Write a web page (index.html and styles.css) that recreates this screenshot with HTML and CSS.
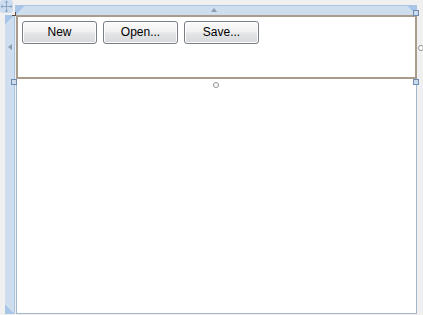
FILE: index.html
```html
<!DOCTYPE html>
<html>
<head>
<meta charset="utf-8">
<link rel="stylesheet" href="styles.css">
</head>
<body>
<div class="designer">
  <div class="corner"></div>
  <div class="ruler-top"><span class="tri-up"></span></div>
  <div class="ruler-left"><span class="tri-left"></span></div>
  <div class="canvas">
    <div class="panel">
      <button class="btn">New</button>
      <button class="btn">Open...</button>
      <button class="btn">Save...</button>
    </div>
  </div>
  <div class="move">
    <svg width="13" height="13" viewBox="0 0 13 13">
      <g fill="none" stroke="#8aa6c4" stroke-width="1">
        <path d="M6.5 1.5v10M1.5 6.5h10"/>
      </g>
      <g fill="#8aa6c4">
        <path d="M6.5 0.5l2 2h-4z"/>
        <path d="M6.5 12.5l2-2h-4z"/>
        <path d="M0.5 6.5l2-2v4z"/>
        <path d="M12.5 6.5l-2-2v4z"/>
      </g>
    </svg>
  </div>
  <span class="mark-tl"></span>
  <span class="handle h-tr"></span>
  <span class="handle h-br"></span>
  <span class="handle h-bl"></span>
  <span class="circle c-bottom"></span>
  <span class="circle c-right"></span>
</div>
</body>
</html>
```
FILE: styles.css
```css
html, body {
  margin: 0;
  padding: 0;
  background: #f0f0f0;
  width: 423px;
  height: 315px;
  overflow: hidden;
}
.designer {
  position: relative;
  display: grid;
  grid-template-columns: 5px 10px 1px 401px;
  grid-template-rows: 5px 10px 299px;
  width: 423px;
  height: 315px;
}
.corner {
  grid-column: 2;
  grid-row: 2;
}
.ruler-top {
  grid-column: 3 / 5;
  grid-row: 2;
  background: #cfdeef;
  border-top: 1px solid #abc6e4;
  box-sizing: border-box;
  position: relative;
  background-image: linear-gradient(225deg, #a8c5e8 0 7px, transparent 7px), linear-gradient(135deg, #a8c5e8 0 7px, transparent 7px);
  background-repeat: no-repeat;
  background-size: 10px 10px, 10px 10px;
  background-position: right top, left top;
}
.ruler-left {
  grid-column: 2;
  grid-row: 3;
  background: #cfdeef;
  border-right: 1px solid #abc6e4;
  box-sizing: border-box;
  position: relative;
  background-image: linear-gradient(135deg, #a8c5e8 0 7px, transparent 7px), linear-gradient(45deg, #a8c5e8 0 7px, transparent 7px);
  background-repeat: no-repeat;
  background-size: 10px 10px, 10px 10px;
  background-position: left top, left bottom;
}
.tri-up {
  position: absolute;
  left: 196px;
  top: 2px;
  width: 0;
  height: 0;
  border-left: 3px solid transparent;
  border-right: 3px solid transparent;
  border-bottom: 4px solid #8a9cb0;
}
.tri-left {
  position: absolute;
  left: 3px;
  top: 29px;
  width: 0;
  height: 0;
  border-top: 3px solid transparent;
  border-bottom: 3px solid transparent;
  border-right: 4px solid #8a9cb0;
}
.canvas {
  grid-column: 4;
  grid-row: 3;
  background: #ffffff;
  border: 1px solid #a3b6ca;
  border-top: none;
  box-sizing: border-box;
  height: 299px;
}
.panel {
  margin-left: -1px;
  margin-right: -1px;
  height: 64px;
  box-sizing: border-box;
  border: 2px solid #a99c8c;
  padding: 4px 4px 0 4px;
  display: flex;
  align-items: flex-start;
  gap: 6px;
  background: #ffffff;
}
.btn {
  width: 75px;
  height: 23px;
  margin: 0;
  padding: 0;
  border: 1px solid #7a7f86;
  border-radius: 3px;
  background: linear-gradient(#fbfbfb 0%, #f1f1f1 45%, #e4e5e7 55%, #d6d8db 100%);
  box-shadow: inset 0 0 0 1px #fdfdfd;
  font-family: "Liberation Sans", Arial, sans-serif;
  font-size: 12px;
  font-weight: normal;
  color: #000000;
  line-height: 21px;
  text-align: center;
}
.move {
  position: absolute;
  left: 0;
  top: 0;
  width: 13px;
  height: 13px;
  background: #cddcee;
  border-radius: 3px;
}
.move svg { display: block; }
.mark-tl {
  position: absolute;
  left: 12px;
  top: 12px;
  width: 3px;
  height: 3px;
  border-right: 1px solid #5a4a3a;
  border-bottom: 1px solid #5a4a3a;
}
.handle {
  position: absolute;
  width: 4px;
  height: 4px;
  background: #ccdcec;
  border: 1px solid #6f8db0;
}
.h-tr { left: 413px; top: 10px; }
.h-br { left: 413px; top: 79px; }
.h-bl { left: 11px; top: 79px; }
.circle {
  position: absolute;
  width: 4px;
  height: 4px;
  border: 1px solid #909090;
  border-radius: 50%;
  background: #ffffff;
}
.c-bottom { left: 213px; top: 82px; }
.c-right { left: 418px; top: 45px; }
```
